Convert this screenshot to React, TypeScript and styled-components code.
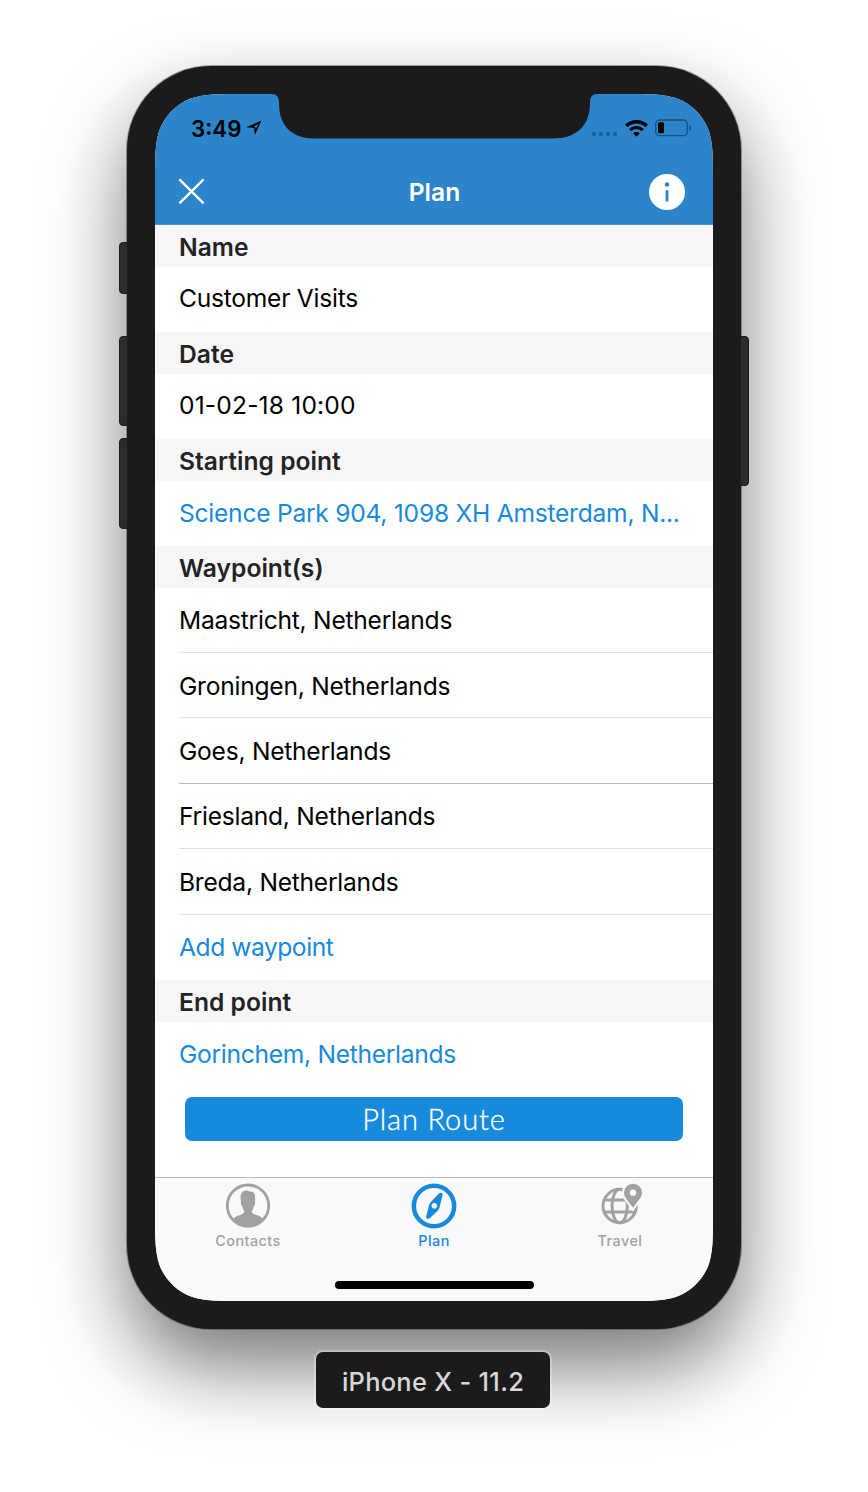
import React from 'react';
import styled, { createGlobalStyle } from 'styled-components';

const BLUE = '#178adc';
const NAV_BLUE = '#2c84cb';

const GlobalStyle = createGlobalStyle`
  * { box-sizing: border-box; }
  body { margin: 0; background: #fff; font-family: Inter, 'Liberation Sans', sans-serif; }
`;

const Stage = styled.main`
  display: flex;
  flex-direction: column;
  align-items: center;
  width: 868px;
  height: 1492px;
  padding-top: 66px;
  overflow: hidden;
`;

const Device = styled.div`
  position: relative;
  width: 614px;
  height: 1263px;
  padding: 28px;
  border-radius: 84px;
  background: #1b1b1b;
  box-shadow: 0 0 0 1px rgba(60, 60, 60, 0.45), 0 38px 80px rgba(0, 0, 0, 0.53);
`;

const SideButton = styled.span<{ $side: 'left' | 'right'; $top: number; $height: number }>`
  position: absolute;
  ${(p) => p.$side}: -8px;
  top: ${(p) => p.$top}px;
  width: 9px;
  height: ${(p) => p.$height}px;
  border: 1px solid #1c1c1c;
  border-radius: ${(p) => (p.$side === 'left' ? '4px 0 0 4px' : '0 4px 4px 0')};
  background: #2c2c2c;
`;

/* Smoothed corners, 58px nominal radius. */
const Screen = styled.div`
  display: flex;
  flex-direction: column;
  width: 558px;
  height: 1207px;
  background: #fff;
  clip-path: path('M88.7 0H469.3C494.9 0 507.6 0 521.4 4.3C536.4 9.8 548.2 21.6 553.7 36.6C558 50.4 558 63.1 558 88.7V1118.3C558 1143.9 558 1156.6 553.7 1170.4C548.2 1185.4 536.4 1197.2 521.4 1202.7C507.6 1207 494.9 1207 469.3 1207H88.7C63.1 1207 50.4 1207 36.6 1202.7C21.6 1197.2 9.8 1185.4 4.3 1170.4C0 1156.6 0 1143.9 0 1118.3V88.7C0 63.1 0 50.4 4.3 36.6C9.8 21.6 21.6 9.8 36.6 4.3C50.4 0 63.1 0 88.7 0Z');
`;

const Notch = styled.svg`
  position: absolute;
  left: 142px;
  top: 27px;
`;

const TopBar = styled.header`
  flex: none;
  height: 131px;
  background: ${NAV_BLUE};
  border-bottom: 1px solid #4e8fc4;
`;

const StatusBar = styled.div`
  display: flex;
  justify-content: space-between;
  height: 65px;
  padding: 20px 21px 0 36px;
`;

const StatusGroup = styled.div`
  display: flex;
  align-items: center;
  height: 28px;
`;

const Clock = styled.span`
  margin-right: 5px;
  font-size: 22.3px;
  font-weight: 600;
  letter-spacing: 0;
  color: #000;
`;

const SignalDots = styled.span`
  display: flex;
  gap: 3px;
  margin: 12px 8px 0 0;
`;

const Dot = styled.i`
  width: 4px;
  height: 4px;
  border-radius: 1px;
  background: rgba(0, 0, 0, 0.25);
`;

const NavRow = styled.div`
  display: flex;
  align-items: center;
  justify-content: space-between;
  height: 65px;
  padding: 0 28px 0 23px;
`;

const Title = styled.h1`
  margin: 0 0 0 15px;
  font-size: 24.6px;
  font-weight: 600;
  letter-spacing: 0;
  color: #fff;
`;

const SectionTitle = styled.h2`
  display: flex;
  align-items: center;
  height: 41.6px;
  margin: 0;
  padding: 2.6px 24px 0;
  background: #f6f6f6;
  color: #232323;
  font-size: 24.6px;
  font-weight: 600;
  letter-spacing: 0.03px;
`;

const Row = styled.div<{ $link?: boolean; $line?: string; $tracking?: number; $lineHeight?: number }>`
  height: 65.43px;
  margin-left: 24px;
  padding-right: 30px;
  border-bottom: 1px solid ${(p) => p.$line ?? 'transparent'};
  color: ${(p) => (p.$link ? BLUE : '#000')};
  font-size: 24.6px;
  letter-spacing: ${(p) => p.$tracking ?? -0.25}px;
  line-height: ${(p) => p.$lineHeight ?? 65}px;
  white-space: nowrap;
`;

const Content = styled.section`
  flex: 1;
`;

const PrimaryButton = styled.button`
  display: flex;
  align-items: center;
  justify-content: center;
  width: 498px;
  height: 44px;
  margin: 10px 0 0 30px;
  padding: 0 0 2px;
  border: 0;
  border-radius: 7px;
  background: ${BLUE};
  color: #fff;
  font-family: Lato, 'Liberation Sans', sans-serif;
  font-size: 29px;
  font-weight: 300;
  letter-spacing: 0.9px;
  -webkit-text-stroke: 0.3px #fff;
`;

const TabBar = styled.nav`
  display: grid;
  grid-template-columns: repeat(3, 1fr);
  flex: none;
  height: 98px;
  border-top: 1px solid #bababa;
  background: #f9f9f9;
`;

const Tab = styled.a<{ $active?: boolean }>`
  display: flex;
  flex-direction: column;
  align-items: center;
  padding-top: 5px;
  color: ${(p) => (p.$active ? BLUE : '#a1a1a1')};
`;

const TabLabel = styled.span`
  margin-top: 2px;
  color: inherit;
  font-size: 14.4px;
  font-weight: 500;
  letter-spacing: 0.45px;
  line-height: 20px;
`;

const HomeBar = styled.div`
  flex: none;
  display: flex;
  justify-content: center;
  height: 26px;
  padding-top: 6px;
  background: #f9f9f9;
`;

const HomeIndicator = styled.span`
  width: 199px;
  height: 8px;
  border-radius: 4px;
  background: #000;
`;

const Caption = styled.div`
  z-index: 1;
  display: flex;
  align-items: center;
  justify-content: center;
  width: 234px;
  height: 56px;
  margin: 23px 2px 0 0;
  padding-top: 3px;
  border-radius: 7px;
  background: #1b1b1b;
  box-shadow: 0 0 0 2px rgba(255, 255, 255, 0.28);
  color: #d8d8d8;
  font-size: 25.4px;
  font-weight: 500;
  letter-spacing: 0.3px;
`;

const LocationIcon = () => (
  <svg width="16" height="16" viewBox="0 0 16 16">
    <path d="M.2 7.2 15.4.6 8.9 15 8.1 8.1ZM7.4 6.5 9.3 6.9 9.7 9.2 12.4 4.1Z" fill="#000" fillRule="evenodd" />
  </svg>
);

const WifiIcon = () => (
  <svg width="23" height="17" viewBox="0 0 23 17">
    <g fill="none" stroke="#000">
      <path d="M1.3 5.9a14.6 14.6 0 0 1 20.4 0" strokeWidth="3.6" />
      <path d="M5.2 10.1a8.9 8.9 0 0 1 12.6 0" strokeWidth="3.2" />
    </g>
    <path d="M11.5 16.7 8.2 13.4a4.7 4.7 0 0 1 6.6 0Z" fill="#000" />
  </svg>
);

const BatteryIcon = () => (
  <svg width="37" height="18" viewBox="0 0 37 18" style={{ marginLeft: 7 }}>
    <rect x=".75" y="1" width="31.5" height="15.7" rx="3.8" fill="none" stroke="#000" strokeOpacity=".4" strokeWidth="1.3" />
    <rect x="3" y="3.3" width="6" height="11" rx="1.6" fill="#000" />
    <path d="M34 6.2c2.6.8 2.6 4.8 0 5.6Z" fill="#000" fillOpacity=".4" />
  </svg>
);

const CloseIcon = () => (
  <svg width="27" height="27" viewBox="0 0 27 27">
    <path d="M1.4 1.4 25.6 25.4M25.6 1.4 1.4 25.4" stroke="#fff" strokeWidth="2.3" />
  </svg>
);

const InfoIcon = () => (
  <svg width="36" height="36" viewBox="0 0 36 36">
    <circle cx="18" cy="18" r="18" fill="#fff" />
    <circle cx="18" cy="10.5" r="2.2" fill={NAV_BLUE} />
    <path d="M18 16.2v11.2" stroke={NAV_BLUE} strokeWidth="2.8" />
  </svg>
);

const ContactsIcon = () => (
  <svg width="46" height="46" viewBox="0 0 138 138">
    <circle cx="69" cy="68" r="62" fill="none" stroke="currentColor" strokeWidth="8.5" />
    <path
      d="M24 109C33 95 55 97 58 87C58 82 53 78 51 68C47 65 47 60 48 56C46 45 46 35 51 29C56 21 69 20 75 26C84 25 90 30 90 40C90 47 91 51 90 56C91 61 90 66 87 69C85 78 81 81 80 87C84 97 105 95 114 109C103 124 88 131 69 131S35 124 24 109Z"
      fill="currentColor"
    />
  </svg>
);

const CompassIcon = () => (
  <svg width="46" height="46" viewBox="0 0 138 138">
    <circle cx="69" cy="69" r="60.5" fill="none" stroke="currentColor" strokeWidth="13.5" />
    <path
      d="M84 31Q94 26 95 35L85 76Q84 79 80 83L57 105Q47 113 45 102L54 67Q55 63 59 58ZM70 60a8.5 8.5 0 1 0 .01 0Z"
      fill="currentColor"
      fillRule="evenodd"
    />
  </svg>
);

const TravelIcon = () => (
  <svg width="46" height="46" viewBox="-5 0 138 138">
    <g fill="none" stroke="currentColor" strokeWidth="9">
      <circle cx="63" cy="69" r="50" />
      <ellipse cx="63" cy="69" rx="23" ry="50" />
      <path d="M16 51H110M16 87H110" />
    </g>
    <path
      d="M103 2a27 27 0 0 1 27 27C130 43 117 54 103 74C89 54 76 43 76 29A27 27 0 0 1 103 2Z"
      fill="currentColor"
      stroke="#f9f9f9"
      strokeWidth="13"
      paintOrder="stroke"
    />
    <circle cx="103" cy="29" r="9.5" fill="#f9f9f9" />
  </svg>
);

const waypoints = [
  { name: 'Maastricht, Netherlands', line: '#e0e0e0', lineHeight: 65 },
  { name: 'Groningen, Netherlands', line: '#e0e0e0', lineHeight: 66.4 },
  { name: 'Goes, Netherlands', line: '#bcbcbc', lineHeight: 66.4 },
  { name: 'Friesland, Netherlands', line: '#e0e0e0', lineHeight: 65.4 },
  { name: 'Breda, Netherlands', line: '#e0e0e0', lineHeight: 66.4 },
];

export default function App() {
  return (
    <>
      <GlobalStyle />
      <Stage>
        <Device>
          <SideButton $side="left" $top={176} $height={52} />
          <SideButton $side="left" $top={270} $height={90} />
          <SideButton $side="left" $top={372} $height={91} />
          <SideButton $side="right" $top={270} $height={150} />
          <Screen>
            <TopBar>
              <StatusBar>
                <StatusGroup>
                  <Clock>3:49</Clock>
                  <LocationIcon />
                </StatusGroup>
                <StatusGroup>
                  <SignalDots>
                    <Dot />
                    <Dot />
                    <Dot />
                    <Dot />
                  </SignalDots>
                  <WifiIcon />
                  <BatteryIcon />
                </StatusGroup>
              </StatusBar>
              <NavRow>
                <CloseIcon />
                <Title>Plan</Title>
                <InfoIcon />
              </NavRow>
            </TopBar>
            <Content>
              <SectionTitle>Name</SectionTitle>
              <Row $lineHeight={63.4}>Customer Visits</Row>
              <SectionTitle>Date</SectionTitle>
              <Row $lineHeight={63.4} $tracking={0.16}>01-02-18 10:00</Row>
              <SectionTitle>Starting point</SectionTitle>
              <Row $link>Science Park 904, 1098 XH Amsterdam, N...</Row>
              <SectionTitle>Waypoint(s)</SectionTitle>
              {waypoints.map((w) => (
                <Row key={w.name} $line={w.line} $lineHeight={w.lineHeight}>
                  {w.name}
                </Row>
              ))}
              <Row $link $tracking={-0.45}>Add waypoint</Row>
              <SectionTitle>End point</SectionTitle>
              <Row $link $tracking={-0.3}>Gorinchem, Netherlands</Row>
              <PrimaryButton>Plan Route</PrimaryButton>
            </Content>
            <TabBar>
              <Tab>
                <ContactsIcon />
                <TabLabel>Contacts</TabLabel>
              </Tab>
              <Tab $active>
                <CompassIcon />
                <TabLabel>Plan</TabLabel>
              </Tab>
              <Tab>
                <TravelIcon />
                <TabLabel>Travel</TabLabel>
              </Tab>
            </TabBar>
            <HomeBar>
              <HomeIndicator />
            </HomeBar>
          </Screen>
          <Notch width="330" height="46" viewBox="0 0 330 46">
            <path
              d="M0 0V1H2C8 1 10 4 10 10C10 33 23 45.5 46 45.5H284C307 45.5 321 33 321 10C321 4 323 1 329 1H330V0Z"
              fill="#1b1b1b"
            />
          </Notch>
        </Device>
        <Caption>iPhone X - 11.2</Caption>
      </Stage>
    </>
  );
}
